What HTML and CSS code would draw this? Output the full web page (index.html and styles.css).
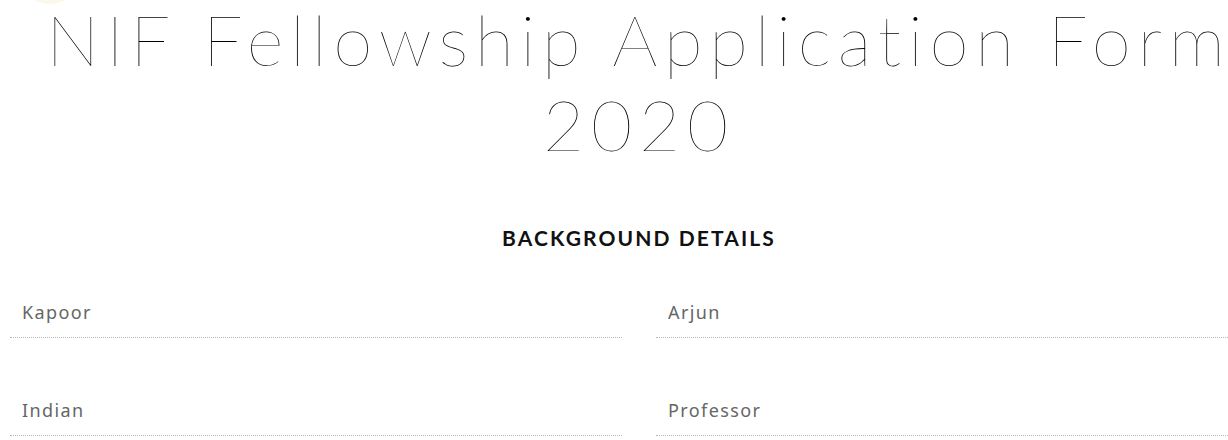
FILE: index.html
```html
<!DOCTYPE html>
<html>
<head>
<link rel="stylesheet" href="styles.css">
</head>
<body>
  <div class="logo"></div>
  <div class="wrap">
    <h1 class="title">NIF Fellowship Application Form 2020</h1>

    <h2 class="section">BACKGROUND DETAILS</h2>

    <div class="fields">
      <div class="field"><input type="text" placeholder="Kapoor"></div>
      <div class="field"><input type="text" placeholder="Arjun"></div>
      <div class="field"><input type="text" placeholder="Indian"></div>
      <div class="field"><input type="text" placeholder="Professor"></div>
    </div>
  </div>
</body>
</html>
```

FILE: styles.css
```css
body {
	margin: 0;
	background: #fff;
	overflow: hidden;
	font-family: "Noto Sans", sans-serif;
}

/* faint bottom edge of the site logo, cut off by the top of the window */
.logo {
	position: absolute;
	top: -46px;
	left: 22px;
	width: 56px;
	height: 50px;
	border-radius: 50%;
	background: #fbf8ea;
}

.wrap {
	width: 1258px;
	margin-left: 10px;
}

.title {
	margin: -4px 0 0;
	text-align: center;
	font-family: Lato, sans-serif;
	font-weight: 100;
	font-size: 71px;
	line-height: 85px;
	letter-spacing: 6.8px;
	color: #000;
}

.section {
	margin: 60px 0 0;
	text-align: center;
	font-family: Lato, sans-serif;
	font-weight: 700;
	font-size: 21px;
	line-height: 24px;
	letter-spacing: 2.1px;
	color: #111;
}

.fields {
	display: grid;
	grid-template-columns: 612px 612px;
	column-gap: 34px;
	row-gap: 53px;
	margin-top: 43px;
}

.field input {
	display: block;
	width: 100%;
	box-sizing: border-box;
	height: 45px;
	padding: 0 12px 7px;
	border: 0;
	border-bottom: 1px dotted #b8b8b8;
	outline: none;
	background: transparent;
	font-family: "Noto Sans", sans-serif;
	font-size: 18px;
	letter-spacing: 1.4px;
	color: #666;
}

.field input::placeholder {
	color: #666;
}
```
